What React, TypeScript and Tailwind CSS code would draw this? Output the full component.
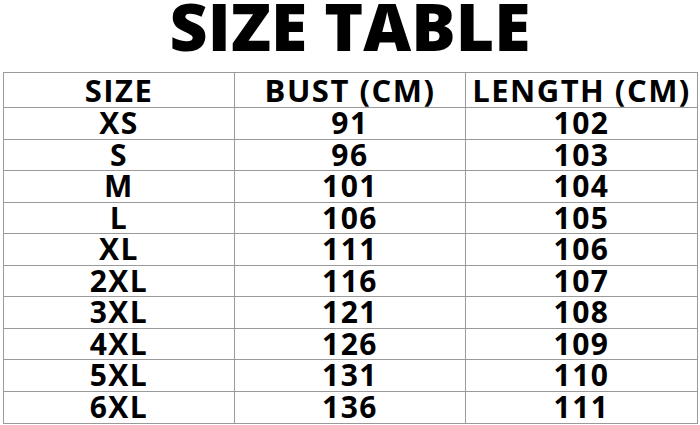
const rows = [
  ['XS', '91', '102'],
  ['S', '96', '103'],
  ['M', '101', '104'],
  ['L', '106', '105'],
  ['XL', '111', '106'],
  ['2XL', '116', '107'],
  ['3XL', '121', '108'],
  ['4XL', '126', '109'],
  ['5XL', '131', '110'],
  ['6XL', '136', '111'],
]

export default function App() {
  return (
    <div className="w-[700px] h-[425px] bg-white text-black font-['Open_Sans',sans-serif] overflow-hidden">
      {/* Title */}
      <div className="h-[72px] flex items-start justify-center">
        <h1 className="text-[66px] font-extrabold leading-[51px]">SIZE TABLE</h1>
      </div>

      {/* Table */}
      <div className="mx-[3px] border border-[#9a9a9a] w-[695px]">
        <div className="grid grid-cols-3 h-[35px] border-b border-[#9a9a9a]">
          <div className="flex items-center justify-center text-[31px] font-bold leading-[30px] tracking-[1.5px] border-r border-[#9a9a9a]">SIZE</div>
          <div className="flex items-center justify-center text-[31px] font-bold leading-[30px] tracking-[1.5px] border-r border-[#9a9a9a]">BUST (CM)</div>
          <div className="flex items-center justify-center text-[31px] font-bold leading-[30px] tracking-[1.5px]">LENGTH (CM)</div>
        </div>
        {rows.map((r, i) => (
          <div
            key={r[0]}
            className={`grid grid-cols-3 h-[31.5px] ${i < rows.length - 1 ? 'border-b border-[#9a9a9a]' : ''}`}
          >
            <div className="flex items-center justify-center text-[30px] font-bold leading-[28px] tracking-[1.5px] border-r border-[#9a9a9a]">{r[0]}</div>
            <div className="flex items-center justify-center text-[30px] font-bold leading-[28px] tracking-[1.5px] border-r border-[#9a9a9a]">{r[1]}</div>
            <div className="flex items-center justify-center text-[30px] font-bold leading-[28px] tracking-[1.5px]">{r[2]}</div>
          </div>
        ))}
      </div>
    </div>
  )
}
